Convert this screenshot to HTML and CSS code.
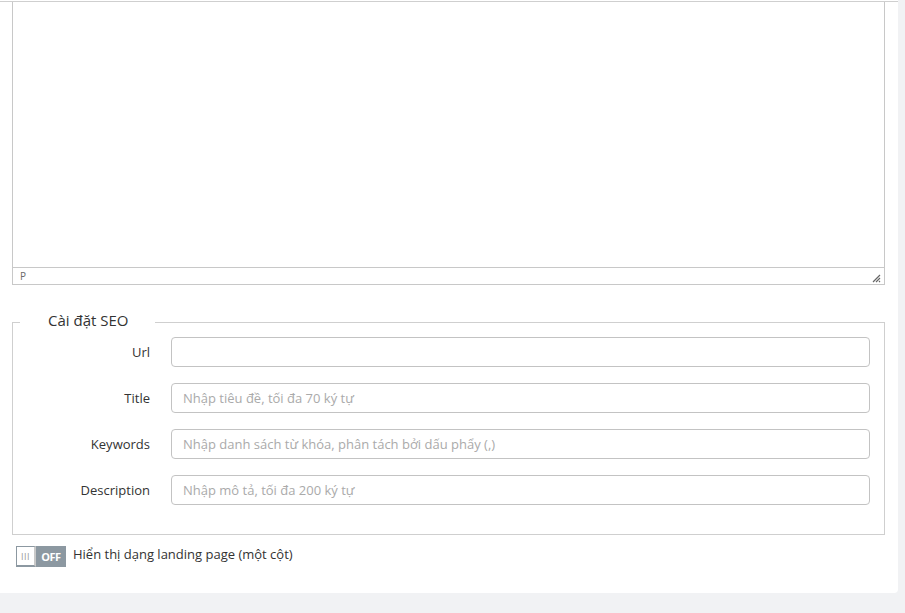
FILE: index.html
```html
<!DOCTYPE html>
<html lang="vi">
<head>
<meta charset="utf-8">
<link rel="stylesheet" href="styles.css">
</head>
<body>
<div class="card">
  <div class="topline"></div>
  <div class="editor">
    <div class="edit-area"></div>
    <div class="statusbar">
      <span class="path">P</span>
      <svg class="resize" width="10" height="10" viewBox="0 0 10 10"><path d="M9 2 L2 9 M9 5 L5 9 M9 8 L8 9" stroke="#666" stroke-width="1.2" fill="none"/></svg>
    </div>
  </div>
  <fieldset class="seo">
    <legend>Cài đặt SEO</legend>
    <div class="row"><label>Url</label><input class="field" type="text"></div>
    <div class="row"><label>Title</label><input class="field" type="text" placeholder="Nhập tiêu đề, tối đa 70 ký tự"></div>
    <div class="row"><label>Keywords</label><input class="field" type="text" placeholder="Nhập danh sách từ khóa, phân tách bởi dấu phẩy (,)"></div>
    <div class="row"><label>Description</label><input class="field" type="text" placeholder="Nhập mô tả, tối đa 200 ký tự"></div>
  </fieldset>
  <div class="landing">
    <div class="switch">
      <span class="handle">III</span>
      <span class="off">OFF</span>
    </div>
    <span class="landing-label">Hiển thị dạng landing page (một cột)</span>
  </div>
</div>
</body>
</html>
```
FILE: styles.css
```css
html, body {
  margin: 0;
  padding: 0;
  background: #f1f2f4;
  font-family: "Open Sans", "Liberation Sans", sans-serif;
  color: #333;
}
.card {
  width: 898px;
  height: 593px;
  background: #fff;
  border-bottom-right-radius: 4px;
  box-sizing: border-box;
  padding: 0 13px 0 12px;
}
.topline {
  height: 1px;
  margin: 0 -13px 0 -12px;
  border-bottom: 1px solid #cfcfcf;
}
.editor {
  border: 1px solid #c8c8c8;
  border-top: none;
  height: 283px;
  box-sizing: border-box;
  display: flex;
  flex-direction: column;
}
.edit-area {
  flex: 1;
}
.statusbar {
  height: 16px;
  border-top: 1px solid #c8c8c8;
  display: flex;
  align-items: center;
  justify-content: space-between;
  padding: 0 3px 0 7px;
  box-sizing: content-box;
}
.path {
  font-size: 10px;
  color: #6b6b6b;
  line-height: 14px;
}
.resize {
  align-self: flex-end;
  margin-bottom: 1px;
}
.seo {
  margin: 25px 0 0 0;
  padding: 0 14px 29px 0;
  border: 1px solid #cfcfcf;
  box-sizing: border-box;
}
.seo legend {
  margin-left: 7px;
  padding: 0 27px 4px 28px;
  font-size: 15px;
  color: #333;
  line-height: 20px;
}
.row {
  display: grid;
  grid-template-columns: 137px 1fr;
  column-gap: 21px;
  align-items: center;
  margin-top: 16px;
}
.row:first-of-type {
  margin-top: 3px;
}
.row label {
  text-align: right;
  font-size: 13px;
  color: #333;
}
.field {
  height: 30px;
  box-sizing: border-box;
  border: 1px solid #c3c3c3;
  border-radius: 4px;
  padding: 0 11px;
  font-family: "Open Sans", "Liberation Sans", sans-serif;
  font-size: 13px;
  color: #333;
  width: 100%;
  outline: none;
}
.field::placeholder {
  color: #aaa;
}
.landing {
  display: flex;
  align-items: center;
  margin-top: 11px;
  padding-left: 4px;
}
.switch {
  display: flex;
  width: 50px;
  height: 21px;
  background: #8c98a1;
  box-sizing: border-box;
}
.handle {
  width: 20px;
  height: 21px;
  box-sizing: border-box;
  background: #fff;
  border: 1px solid #8c98a1;
  border-right: 2px solid #c9c9c9;
  border-bottom: 2px solid #8c98a1;
  font-size: 9px;
  color: #999;
  display: flex;
  align-items: center;
  justify-content: center;
  letter-spacing: 0.5px;
}
.off {
  flex: 1;
  color: #fff;
  font-size: 11px;
  font-weight: 700;
  display: flex;
  align-items: center;
  justify-content: center;
  letter-spacing: -0.5px;
}
.landing-label {
  margin-left: 7px;
  font-size: 13px;
  color: #333;
  margin-top: -6px;
}
```
